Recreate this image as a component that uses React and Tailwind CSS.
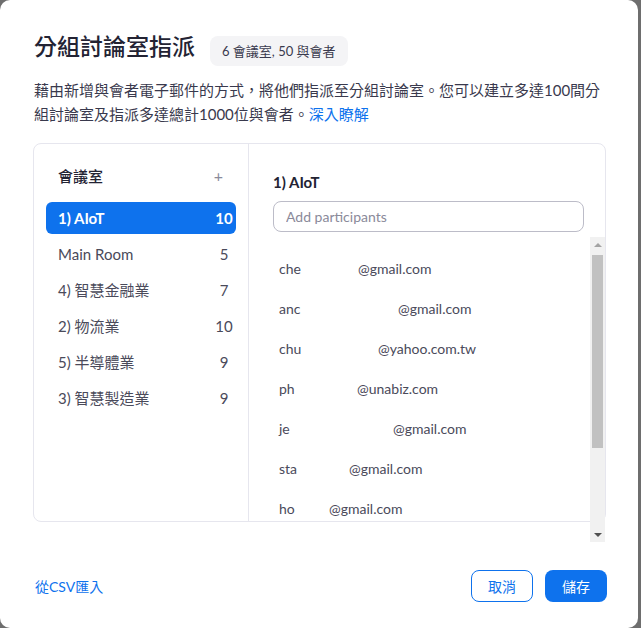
import React, { useState } from 'react';

// rooms shown in the left column
const rooms = [
  { name: '1) AIoT', count: 10 },
  { name: 'Main Room', count: 5 },
  { name: '4) 智慧金融業', count: 7 },
  { name: '2) 物流業', count: 10 },
  { name: '5) 半導體業', count: 9 },
  { name: '3) 智慧製造業', count: 9 },
];

// participant emails (local part is partly hidden in the original)
const participants = [
  { user: 'che', gap: 'w-[79px]', domain: '@gmail.com' },
  { user: 'anc', gap: 'w-[119px]', domain: '@gmail.com' },
  { user: 'chu', gap: 'w-[99px]', domain: '@yahoo.com.tw' },
  { user: 'ph', gap: 'w-[78px]', domain: '@unabiz.com' },
  { user: 'je', gap: 'w-[114px]', domain: '@gmail.com' },
  { user: 'sta', gap: 'w-[70px]', domain: '@gmail.com' },
  { user: 'ho', gap: 'w-[50px]', domain: '@gmail.com' },
  { user: 'lin', gap: 'w-[88px]', domain: '@gmail.com' },
  { user: 'wu', gap: 'w-[64px]', domain: '@gmail.com' },
  { user: 'tsa', gap: 'w-[92px]', domain: '@gmail.com' },
];

const App = () => {
  const [selected, setSelected] = useState(0);
  const [query, setQuery] = useState('');

  return (
    <div className="w-[641px] h-[628px] bg-[#6e6e6e] font-['Lato','Noto_Sans_CJK_TC',sans-serif]">
      <div className="w-[638px] h-[628px] bg-white rounded-[10px] pl-[33px] pr-[32px] pt-[31px] flex flex-col">
        {/* Header */}
        <div className="flex items-start pl-[1px]">
          <h1 className="h-[30px] leading-[30px] text-[23px] font-medium text-[#232333]">分組討論室指派</h1>
          <span className="ml-[15px] mt-[5px] h-[30px] px-[12px] rounded-[8px] bg-[#f4f4f6] text-[13px] leading-[30px] text-[#39394d]">
            6 會議室, 50 與會者
          </span>
        </div>

        <p className="mt-[12px] pl-[1px] text-[15px] leading-[24px] text-[#39394d]">
          藉由新增與會者電子郵件的方式，將他們指派至分組討論室。您可以建立多達100間分組討論室及指派多達總計1000位與會者。
          <a href="#" className="text-[#0e72ed]">深入瞭解</a>
        </p>

        {/* Rooms card */}
        <div className="mt-[17px] h-[379px] border border-[#e6e6ee] rounded-[8px] flex">
          <div className="w-[215px] shrink-0 border-r border-[#e6e6ee] px-[12px] pt-[22px]">
            <div className="flex items-center justify-between pl-[12px] pr-[13px] h-[20px]">
              <span className="text-[15px] font-medium text-[#232333]">會議室</span>
              <button className="text-[16px] text-[#8a8a9a] leading-none">+</button>
            </div>
            <div className="mt-[14px]">
              {rooms.map((r, i) => (
                <div key={r.name} className="h-9 flex items-center" onClick={() => setSelected(i)}>
                  <div
                    className={
                      i === selected
                        ? 'w-full h-8 rounded-[6px] bg-[#0e72ed] text-white font-bold flex items-center justify-between pl-[12px]'
                        : 'w-full h-8 rounded-[6px] text-[#4a4a5a] flex items-center justify-between pl-[12px]'
                    }
                  >
                    <span className="text-[15px]">{r.name}</span>
                    <span className="w-6 text-center text-[15px]">{r.count}</span>
                  </div>
                </div>
              ))}
            </div>
          </div>

          <div className="flex-1 flex flex-col min-w-0">
            <div className="pl-[24px] pr-[21px] pt-[28px]">
              <h2 className="text-[15px] leading-[20px] font-bold text-[#232333]">{rooms[selected].name}</h2>
              <input
                value={query}
                onChange={(e) => setQuery(e.target.value)}
                placeholder="Add participants"
                className="mt-[9px] w-full h-[31px] px-[12px] border border-[#bcbcc8] rounded-[8px] text-[14px] text-[#232333] placeholder:text-[#8a8a9a] outline-none"
              />
            </div>

            {/* Participant list with scrollbar */}
            <div className="relative mt-[5px] h-[305px] shrink-0">
              <div className="h-full overflow-hidden pt-[11px] pl-[30px]">
                {participants.map((p) => (
                  <div key={p.user + p.domain} className="h-10 flex items-center text-[14px] text-[#4a4a5a]">
                    <span className={`inline-block ${p.gap}`}>{p.user}</span>
                    <span>{p.domain}</span>
                  </div>
                ))}
              </div>
              <div className="absolute right-0 top-0 bottom-0 w-[15px] bg-[#f1f1f1] flex flex-col">
                <div className="h-[15px] flex items-center justify-center">
                  <div className="w-0 h-0 border-x-[4px] border-x-transparent border-b-[4px] border-b-[#a3a3a3]" />
                </div>
                <div className="mt-[3px] mx-[2px] h-[193px] bg-[#c1c1c1]" />
                <div className="flex-1" />
                <div className="h-[15px] flex items-center justify-center">
                  <div className="w-0 h-0 border-x-[4px] border-x-transparent border-t-[4px] border-t-[#505050]" />
                </div>
              </div>
            </div>
          </div>
        </div>

        {/* Footer */}
        <div className="mt-[48px] flex items-center justify-between pl-[2px]">
          <a href="#" className="text-[14px] text-[#0e72ed]">從CSV匯入</a>
          <div className="flex gap-[12px] -mr-[1px]">
            <button className="w-[62px] h-[32px] rounded-[8px] border border-[#0e72ed] text-[#0e72ed] text-[14px]">取消</button>
            <button className="w-[62px] h-[32px] rounded-[8px] bg-[#0e72ed] text-white text-[14px]">儲存</button>
          </div>
        </div>
      </div>
    </div>
  );
};

export default App;
